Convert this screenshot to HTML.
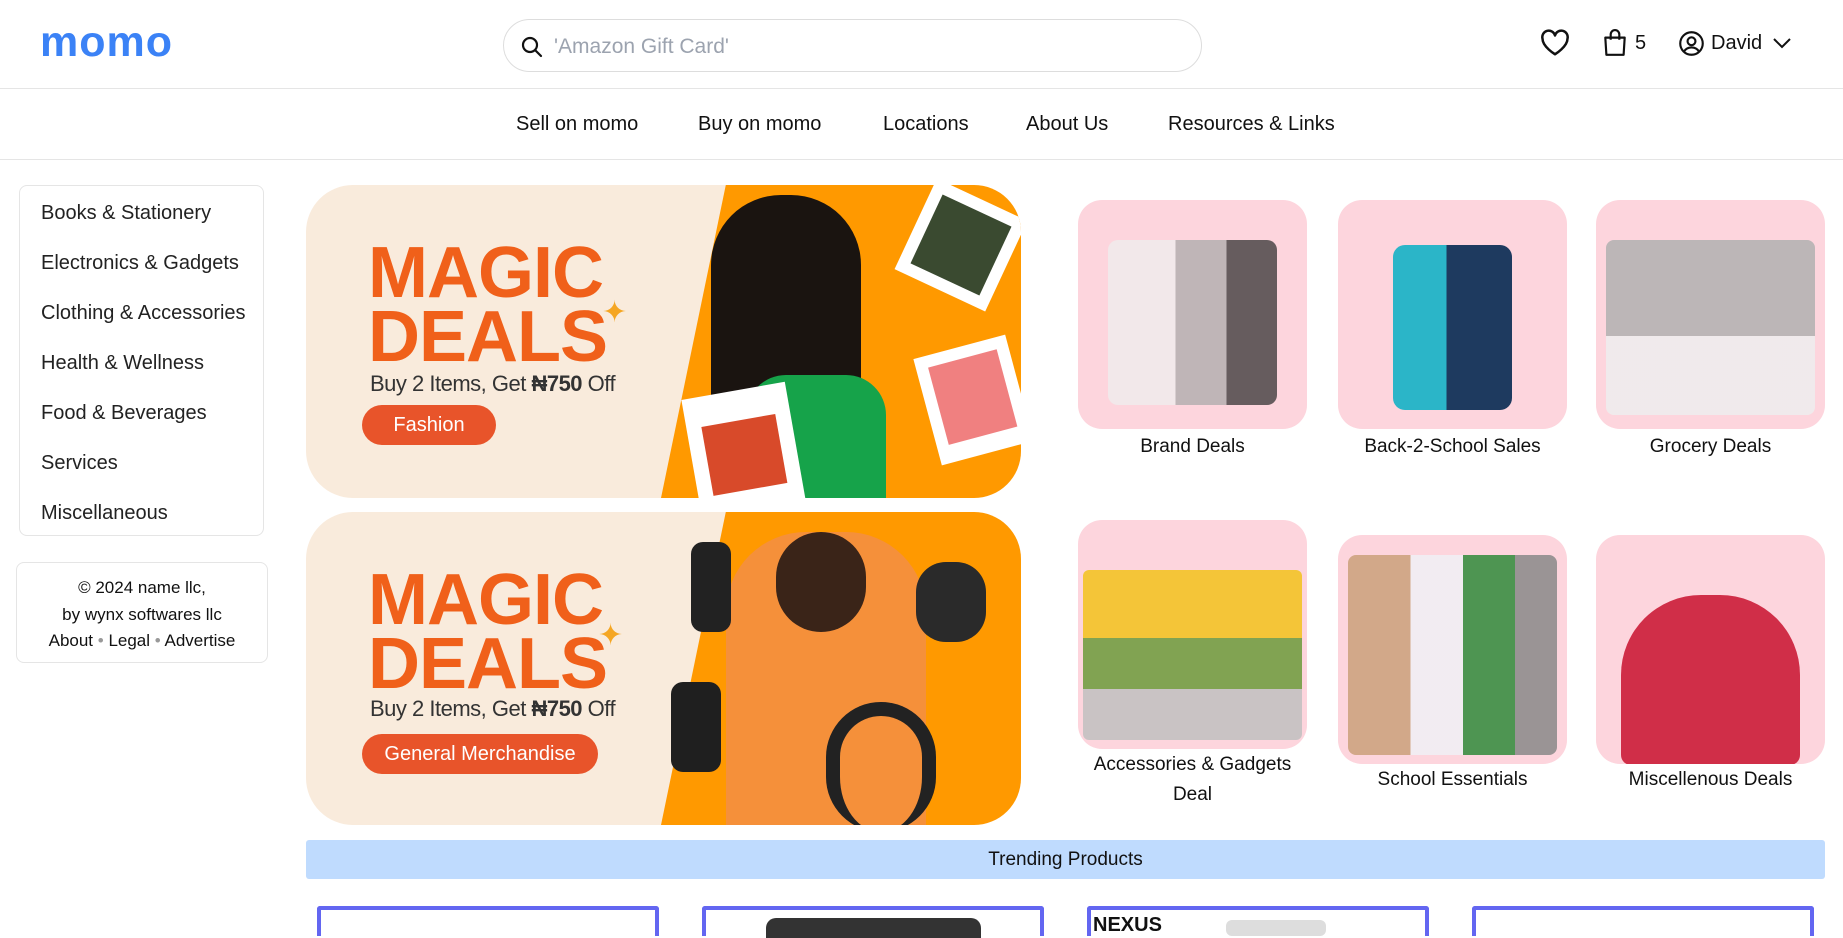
<!DOCTYPE html>
<html><head><meta charset="utf-8">
<style>
*{box-sizing:border-box;margin:0;padding:0}
body{width:1843px;height:925px;overflow:hidden;background:#fff;font-family:"Liberation Sans","DejaVu Sans",sans-serif;color:#111;position:relative}
.abs{position:absolute}
.logo{left:40px;top:18px;font-size:43px;font-weight:bold;color:#3b82f6;letter-spacing:1px}
.search{left:503px;top:19px;width:699px;height:53px;border:1px solid #ddd;border-radius:27px}
.search span{position:absolute;left:50px;top:15px;font-size:21px;color:#9ca3af}
.hline{left:0;width:1843px;height:1px;background:#e5e5e5}
.nav{top:113px;font-size:20px;color:#111}
.side{left:19px;top:185px;width:245px;height:351px;border:1px solid #e5e5e5;border-radius:8px}
.side div{position:absolute;left:21px;font-size:20px;color:#222}
.foot{left:16px;top:562px;width:252px;height:101px;border:1px solid #e5e5e5;border-radius:8px;text-align:center;font-size:17px;line-height:26.5px;padding-top:12px;color:#111}
.foot b{color:#999;font-weight:normal}
.banner{left:306px;width:715px;height:313px;border-radius:47px;overflow:hidden;background:#f9ebdc}
.banner .or{position:absolute;top:0;bottom:0;right:0;width:360px;background:#ff9900;clip-path:polygon(18% 0,100% 0,100% 100%,0 100%)}
.magic{position:absolute;left:62px;font-weight:bold;font-size:72px;line-height:64px;color:#f0601a;letter-spacing:-1px;font-family:"Liberation Sans",sans-serif}
.sub{position:absolute;left:64px;font-size:22px;color:#333;letter-spacing:-0.5px}
.btn{position:absolute;left:56px;height:40px;border-radius:20px;background:#e8542a;color:#fff;font-size:20px;text-align:center;line-height:40px}
.tile{width:229px;height:229px;border-radius:24px;background:#fdd5dd;overflow:hidden}
.lbl{width:229px;text-align:center;font-size:19px;line-height:30px;color:#111}
.trend{left:306px;top:840px;width:1519px;height:39px;background:#bfdbfe;border-radius:3px;text-align:center;line-height:39px;font-size:19px}
.card{top:906px;width:342px;height:30px;border:4px solid #6366f1;border-bottom:none;border-radius:3px 3px 0 0}
</style></head><body>
<div class="abs logo">momo</div>
<div class="abs search">
<svg style="position:absolute;left:16px;top:15px" width="24" height="24" viewBox="0 0 24 24" fill="none" stroke="#111" stroke-width="2.2"><circle cx="10" cy="10" r="7"/><path d="M15.5 15.5L21 21" stroke-linecap="round"/></svg>
<span>'Amazon Gift Card'</span></div>
<svg class="abs" style="left:1540px;top:29px" width="30" height="28" viewBox="0 0 24 22" fill="none" stroke="#111" stroke-width="2" stroke-linejoin="round"><path d="M12 20S2 14 2 7.5A5 5 0 0 1 12 5a5 5 0 0 1 10 2.5C22 14 12 20 12 20z"/></svg>
<svg class="abs" style="left:1602px;top:29px" width="26" height="28" viewBox="0 0 24 26" fill="none" stroke="#111" stroke-width="2" stroke-linejoin="round"><path d="M3 8h18l-1 16H4z"/><path d="M8 10V5a4 4 0 0 1 8 0v5"/></svg>
<div class="abs" style="left:1635px;top:32px;font-size:20px">5</div>
<svg class="abs" style="left:1678px;top:30px" width="27" height="27" viewBox="0 0 24 24" fill="none" stroke="#111" stroke-width="1.9"><circle cx="12" cy="12" r="10"/><circle cx="12" cy="10" r="3.5"/><path d="M5.5 19c1.5-2.5 4-3.5 6.5-3.5s5 1 6.5 3.5"/></svg>
<div class="abs" style="left:1711px;top:32px;font-size:20px">David</div>
<svg class="abs" style="left:1772px;top:36px" width="20" height="14" viewBox="0 0 20 14" fill="none" stroke="#111" stroke-width="2"><path d="M2 3l8 8 8-8"/></svg>
<div class="abs hline" style="top:88px"></div>
<div class="abs nav" style="left:516px">Sell on momo</div>
<div class="abs nav" style="left:698px">Buy on momo</div>
<div class="abs nav" style="left:883px">Locations</div>
<div class="abs nav" style="left:1026px">About Us</div>
<div class="abs nav" style="left:1168px">Resources &amp; Links</div>
<div class="abs hline" style="top:159px"></div>

<div class="abs side">
<div style="top:16px">Books &amp; Stationery</div>
<div style="top:66px">Electronics &amp; Gadgets</div>
<div style="top:116px">Clothing &amp; Accessories</div>
<div style="top:166px">Health &amp; Wellness</div>
<div style="top:216px">Food &amp; Beverages</div>
<div style="top:266px">Services</div>
<div style="top:316px">Miscellaneous</div>
</div>
<div class="abs foot">© 2024 name llc,<br>by wynx softwares llc<br>About <b>•</b> Legal <b>•</b> Advertise</div>

<div class="abs banner" style="top:185px">
<div class="or"></div>
<div style="position:absolute;left:405px;top:10px;width:150px;height:330px;border-radius:70px 70px 0 0;background:#1a1410"></div>
<div style="position:absolute;left:440px;top:190px;width:140px;height:140px;background:#16a34a;border-radius:40px 40px 0 0"></div>
<div style="position:absolute;left:605px;top:10px;width:100px;height:100px;background:#fff;transform:rotate(25deg)"><div style="margin:12px;height:76px;background:#3a4a30"></div></div>
<div style="position:absolute;left:620px;top:160px;width:95px;height:110px;background:#fff;transform:rotate(-15deg)"><div style="margin:12px;height:80px;background:#f08080"></div></div>
<div style="position:absolute;left:385px;top:205px;width:105px;height:120px;background:#fff;transform:rotate(-10deg)"><div style="margin:30px 15px;height:70px;background:#d84a2a"></div></div>
<div class="magic" style="top:56px">MAGIC<br>DEALS</div>
<div style="position:absolute;left:296px;top:110px;color:#f5a623;font-size:30px">✦</div>
<div class="sub" style="top:186px">Buy 2 Items, Get <b>₦750</b> Off</div>
<div class="btn" style="top:220px;width:134px">Fashion</div>
</div>

<div class="abs banner" style="top:512px">
<div class="or"></div>
<div style="position:absolute;left:420px;top:20px;width:200px;height:300px;background:#f5903a;border-radius:80px 80px 0 0"></div>
<div style="position:absolute;left:470px;top:20px;width:90px;height:100px;background:#3a2418;border-radius:45px"></div>
<div style="position:absolute;left:385px;top:30px;width:40px;height:90px;background:#222;border-radius:12px"></div>
<div style="position:absolute;left:610px;top:50px;width:70px;height:80px;background:#2a2a2a;border-radius:30px"></div>
<div style="position:absolute;left:365px;top:170px;width:50px;height:90px;background:#1f1f1f;border-radius:12px"></div>
<div style="position:absolute;left:520px;top:190px;width:110px;height:130px;border:14px solid #222;border-radius:55px;border-bottom:none"></div>
<div class="magic" style="top:56px">MAGIC<br>DEALS</div>
<div style="position:absolute;left:292px;top:106px;color:#f5a623;font-size:30px">✦</div>
<div class="sub" style="top:184px">Buy 2 Items, Get <b>₦750</b> Off</div>
<div class="btn" style="top:222px;width:236px">General Merchandise</div>
</div>

<div class="abs tile" style="left:1078px;top:200px"><div style="margin:40px 30px 20px;height:165px;background:linear-gradient(90deg,#eee 0 40%,#aaa 40% 70%,#333 70%);border-radius:10px;opacity:.75"></div></div>
<div class="abs lbl" style="left:1078px;top:432px">Brand Deals</div>
<div class="abs tile" style="left:1338px;top:200px"><div style="margin:45px 55px 0;height:165px;background:linear-gradient(90deg,#2bb5c8 0 45%,#1e3a5f 45%);border-radius:12px"></div></div>
<div class="abs lbl" style="left:1338px;top:432px">Back-2-School Sales</div>
<div class="abs tile" style="left:1596px;top:200px"><div style="margin:40px 10px 0;height:175px;background:linear-gradient(180deg,#b0b0b0 0 55%,#eee 55%);border-radius:8px;opacity:.85"></div></div>
<div class="abs lbl" style="left:1596px;top:432px">Grocery Deals</div>

<div class="abs tile" style="left:1078px;top:520px"><div style="margin:50px 5px 0;height:170px;background:linear-gradient(180deg,#f2c21b 0 40%,#6b9a3a 40% 70%,#c0c0c0 70%);border-radius:6px;opacity:.85"></div></div>
<div class="abs lbl" style="left:1078px;top:750px">Accessories &amp; Gadgets<br>Deal</div>
<div class="abs tile" style="left:1338px;top:535px"><div style="margin:20px 10px 0;height:200px;background:linear-gradient(90deg,#caa07a 0 30%,#f0f0f5 30% 55%,#2f8a3a 55% 80%,#888 80%);border-radius:8px;opacity:.85"></div></div>
<div class="abs lbl" style="left:1338px;top:765px">School Essentials</div>
<div class="abs tile" style="left:1596px;top:535px"><div style="margin:60px 25px 0;height:170px;background:#c8102e;border-radius:80px 80px 10px 10px;opacity:.85"></div></div>
<div class="abs lbl" style="left:1596px;top:765px">Miscellenous Deals</div>

<div class="abs trend">Trending Products</div>
<div class="abs card" style="left:317px"></div>
<div class="abs card" style="left:702px"><div style="margin:8px 0 0 60px;width:215px;height:20px;background:#333;border-radius:10px 10px 0 0"></div></div>
<div class="abs card" style="left:1087px"><div style="position:absolute;left:2px;top:4px;font-weight:bold;font-size:20px;color:#111">NEXUS</div><div style="margin:10px 0 0 135px;width:100px;height:16px;background:#ddd;border-radius:6px"></div></div>
<div class="abs card" style="left:1472px"></div>
</body></html>
